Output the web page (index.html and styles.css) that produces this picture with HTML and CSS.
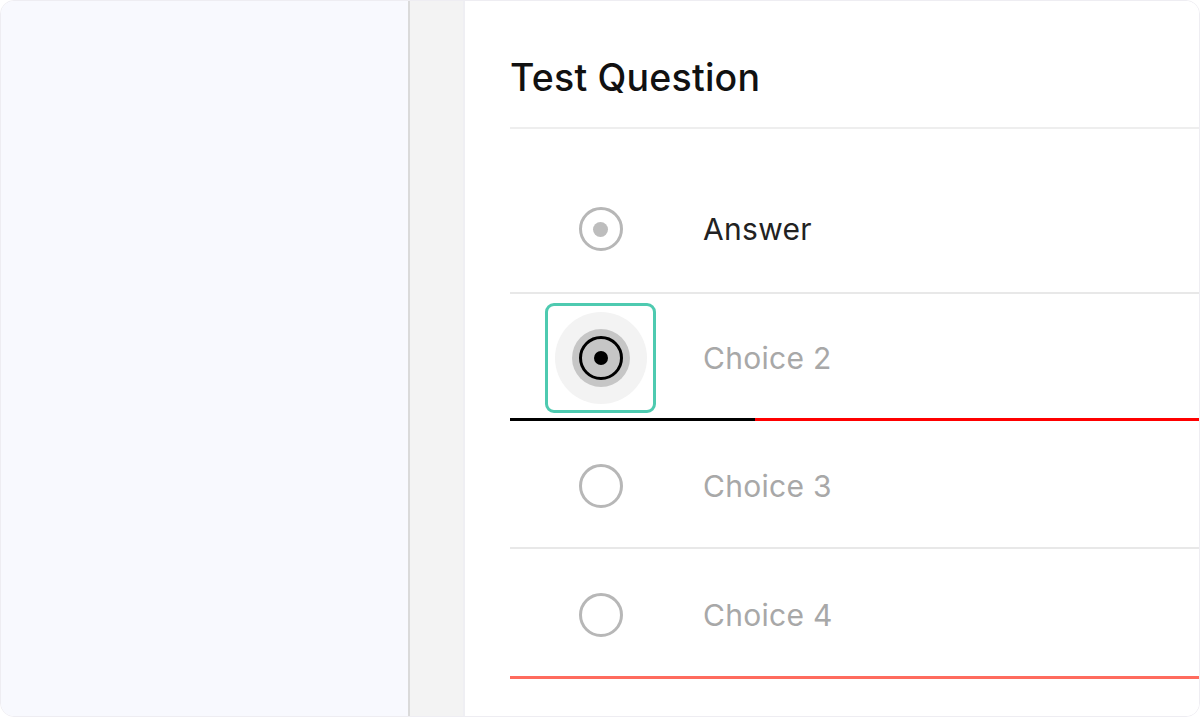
FILE: index.html
```html
<!DOCTYPE html>
<html>
<head>
<meta charset="utf-8">
<link rel="stylesheet" href="styles.css">
</head>
<body>
<div class="frame">
  <aside class="sidebar"></aside>
  <div class="gutter"></div>
  <main class="card">
    <h1 class="title">Test Question</h1>
    <div class="list">
      <div class="row row-first">
        <div class="radio-cell"><span class="radio radio-disabled-checked"><span class="dot"></span></span></div>
        <span class="label label-dark">Answer</span>
      </div>
      <div class="row row-focus">
        <div class="radio-cell focus-box">
          <span class="halo"></span>
          <span class="ring-bg"></span>
          <span class="radio radio-checked"><span class="dot"></span></span>
        </div>
        <span class="label">Choice 2</span>
        <div class="underline"><span class="ul-black"></span><span class="ul-red"></span></div>
      </div>
      <div class="row row-low">
        <div class="radio-cell"><span class="radio"></span></div>
        <span class="label">Choice 3</span>
      </div>
      <div class="row row-low row-last">
        <div class="radio-cell"><span class="radio"></span></div>
        <span class="label">Choice 4</span>
      </div>
    </div>
  </main>
</div>
</body>
</html>
```
FILE: styles.css
```css
* { box-sizing: border-box; }
html, body { margin: 0; padding: 0; background: #ffffff; }
body { font-family: Inter, "Noto Sans", sans-serif; }

.frame {
  width: 1200px;
  height: 717px;
  border: 1px solid #eeedf2;
  border-radius: 14px;
  overflow: hidden;
  display: flex;
}

.sidebar {
  width: 409px;
  flex-shrink: 0;
  background: #f8f9fe;
  border-right: 2px solid #dadada;
}

.gutter {
  width: 55px;
  flex-shrink: 0;
  background: #f3f3f3;
  border-right: 2px solid #efeff3;
}

.card {
  flex: 1;
  background: #ffffff;
  padding-left: 45px;
}

.title {
  margin: 0;
  height: 128px;
  padding-top: 55px;
  font-size: 37.5px;
  font-weight: 500;
  line-height: 44px;
  color: #111111;
  border-bottom: 2px solid #eeeeee;
  letter-spacing: 0.2px;
}

.list { padding-top: 37px; }

.row {
  position: relative;
  display: flex;
  align-items: center;
  height: 128px;
  padding-left: 35px;
  border-bottom: 2px solid #e8e8e8;
}
.row-low { padding-top: 4px; }
.row-focus { border-bottom: none; height: 127px; }
.row-last { border-bottom: 3px solid #ff6b5e; height: 130px; }

.radio-cell {
  position: relative;
  width: 111px;
  height: 110px;
  display: flex;
  align-items: center;
  justify-content: center;
  flex-shrink: 0;
}

.focus-box {
  border: 3px solid #4ecab0;
  border-radius: 9px;
}

.halo {
  position: absolute;
  width: 92px;
  height: 92px;
  border-radius: 50%;
  background: #f3f3f3;
  left: 50%; top: 50%;
  transform: translate(-50%, -50%);
}
.ring-bg {
  position: absolute;
  width: 58px;
  height: 58px;
  border-radius: 50%;
  background: #c6c6c6;
  left: 50%; top: 50%;
  transform: translate(-50%, -50%);
}

.radio {
  position: relative;
  width: 44px;
  height: 44px;
  border-radius: 50%;
  border: 3px solid #b7b7b7;
  display: flex;
  align-items: center;
  justify-content: center;
}
.radio .dot {
  width: 15px;
  height: 15px;
  border-radius: 50%;
  background: #bdbdbd;
}
.radio-checked {
  border: 3.5px solid #000000;
}
.radio-checked .dot {
  background: #000000;
  width: 14px;
  height: 14px;
}

.label {
  margin-left: 47px;
  font-size: 30px;
  color: #a8a8a8;
  letter-spacing: 0.3px;
}
.label-dark { color: #222222; }

.underline {
  position: absolute;
  left: 0;
  right: 0;
  bottom: 0;
  height: 3px;
  display: flex;
}
.ul-black { width: 245px; background: #000000; }
.ul-red { flex: 1; background: #ff0000; }
```
